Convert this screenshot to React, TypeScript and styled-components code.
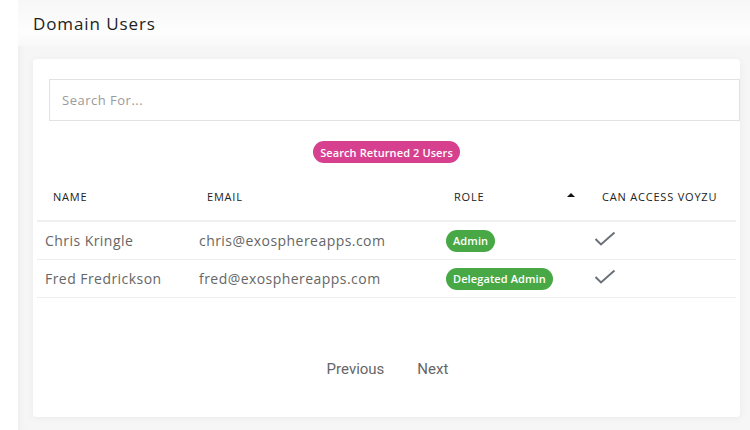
import React from 'react';
import styled, { createGlobalStyle } from 'styled-components';

const GlobalStyle = createGlobalStyle`
  html, body {
    margin: 0;
    padding: 0;
    background: #ffffff;
    font-family: 'Open Sans', 'DejaVu Sans', sans-serif;
  }
`;

const Page = styled.div`
  margin-left: 18px;
  min-height: 430px;
  background: #f6f6f6;
  box-shadow: inset 6px 0 8px -6px rgba(0, 0, 0, 0.06);
`;

const Header = styled.div`
  height: 46px;
  padding: 0 15px;
  display: flex;
  align-items: center;
  background: linear-gradient(#f7f7f7, #fdfdfd 70%, #f8f8f8);
`;

const Title = styled.h1`
  margin: 0;
  font-size: 17px;
  font-weight: 500;
  color: #222;
  letter-spacing: 0.9px;
`;

const Content = styled.div`
  padding: 13px 10px 13px 15px;
`;

const Card = styled.div`
  background: #fff;
  border-radius: 4px;
  box-shadow: 0 1px 8px rgba(0, 0, 0, 0.05);
  padding: 20px 4px 12px;
  height: 326px;
`;

const SearchInput = styled.input`
  display: block;
  box-sizing: border-box;
  margin-left: 12px;
  width: calc(100% - 8px);
  height: 42px;
  border: 1px solid #e2e2e2;
  padding: 0 12px;
  font-family: inherit;
  font-size: 13px;
  letter-spacing: 0.5px;
  color: #333;
  outline: none;
  &::placeholder {
    color: #9a9a9a;
  }
`;

const PillRow = styled.div`
  display: flex;
  justify-content: center;
  margin-top: 20px;
`;

const Pill = styled.span<{ $color: string }>`
  display: inline-flex;
  align-items: center;
  height: 22px;
  padding: 0 7px;
  border-radius: 11px;
  background: ${(p) => p.$color};
  color: #fff;
  font-size: 11px;
  font-weight: 600;
  letter-spacing: 0.1px;
  white-space: nowrap;
`;

const Table = styled.div`
  margin-top: 12px;
`;

const Row = styled.div<{ $head?: boolean }>`
  display: grid;
  grid-template-columns: 154px 247px 148px 1fr;
  align-items: center;
  height: ${(p) => (p.$head ? '45px' : '37px')};
  border-bottom: ${(p) => (p.$head ? '2px solid #f0f0f0' : '1px solid #ededed')};
`;

const HeadCell = styled.div`
  position: relative;
  padding-left: 16px;
  font-size: 11px;
  font-weight: 500;
  letter-spacing: 0.8px;
  color: #222;
  text-transform: uppercase;
  margin-top: -2px;
`;

const SortArrow = styled.span`
  position: absolute;
  right: 11px;
  top: 50%;
  margin-top: -4px;
  width: 0;
  height: 0;
  border-left: 4px solid transparent;
  border-right: 4px solid transparent;
  border-bottom: 4px solid #111;
`;

const Cell = styled.div`
  padding-left: 8px;
  font-size: 14px;
  letter-spacing: 0.45px;
  color: #666;
  white-space: nowrap;
`;

const Pager = styled.div`
  display: flex;
  justify-content: center;
  gap: 33px;
  margin-top: 62px;
  padding-left: 2px;
`;

const PageLink = styled.a`
  font-family: Roboto, 'Liberation Sans', sans-serif;
  font-size: 15px;
  color: #666;
  cursor: pointer;
`;

const Check = () => (
  <svg width="22" height="16" viewBox="0 0 22 16">
    <path d="M1.5 8 L7 13.5 L20.5 1.5" fill="none" stroke="#6b7078" strokeWidth="2" />
  </svg>
);

const users = [
  { name: 'Chris Kringle', email: 'chris@exosphereapps.com', role: 'Admin' },
  { name: 'Fred Fredrickson', email: 'fred@exosphereapps.com', role: 'Delegated Admin' },
];

export default function App() {
  return (
    <Page>
      <GlobalStyle />
      <Header>
        <Title>Domain Users</Title>
      </Header>
      <Content>
        <Card>
          <SearchInput placeholder="Search For..." />
          <PillRow>
            <Pill $color="#d6408f">Search Returned 2 Users</Pill>
          </PillRow>
          <Table>
            <Row $head>
              <HeadCell>Name</HeadCell>
              <HeadCell>Email</HeadCell>
              <HeadCell>
                Role
                <SortArrow />
              </HeadCell>
              <HeadCell>Can Access Voyzu</HeadCell>
            </Row>
            {users.map((u) => (
              <Row key={u.email}>
                <Cell>{u.name}</Cell>
                <Cell>{u.email}</Cell>
                <Cell>
                  <Pill $color="#47a845">{u.role}</Pill>
                </Cell>
                <Cell>
                  <Check />
                </Cell>
              </Row>
            ))}
          </Table>
          <Pager>
            <PageLink>Previous</PageLink>
            <PageLink>Next</PageLink>
          </Pager>
        </Card>
      </Content>
    </Page>
  );
}
